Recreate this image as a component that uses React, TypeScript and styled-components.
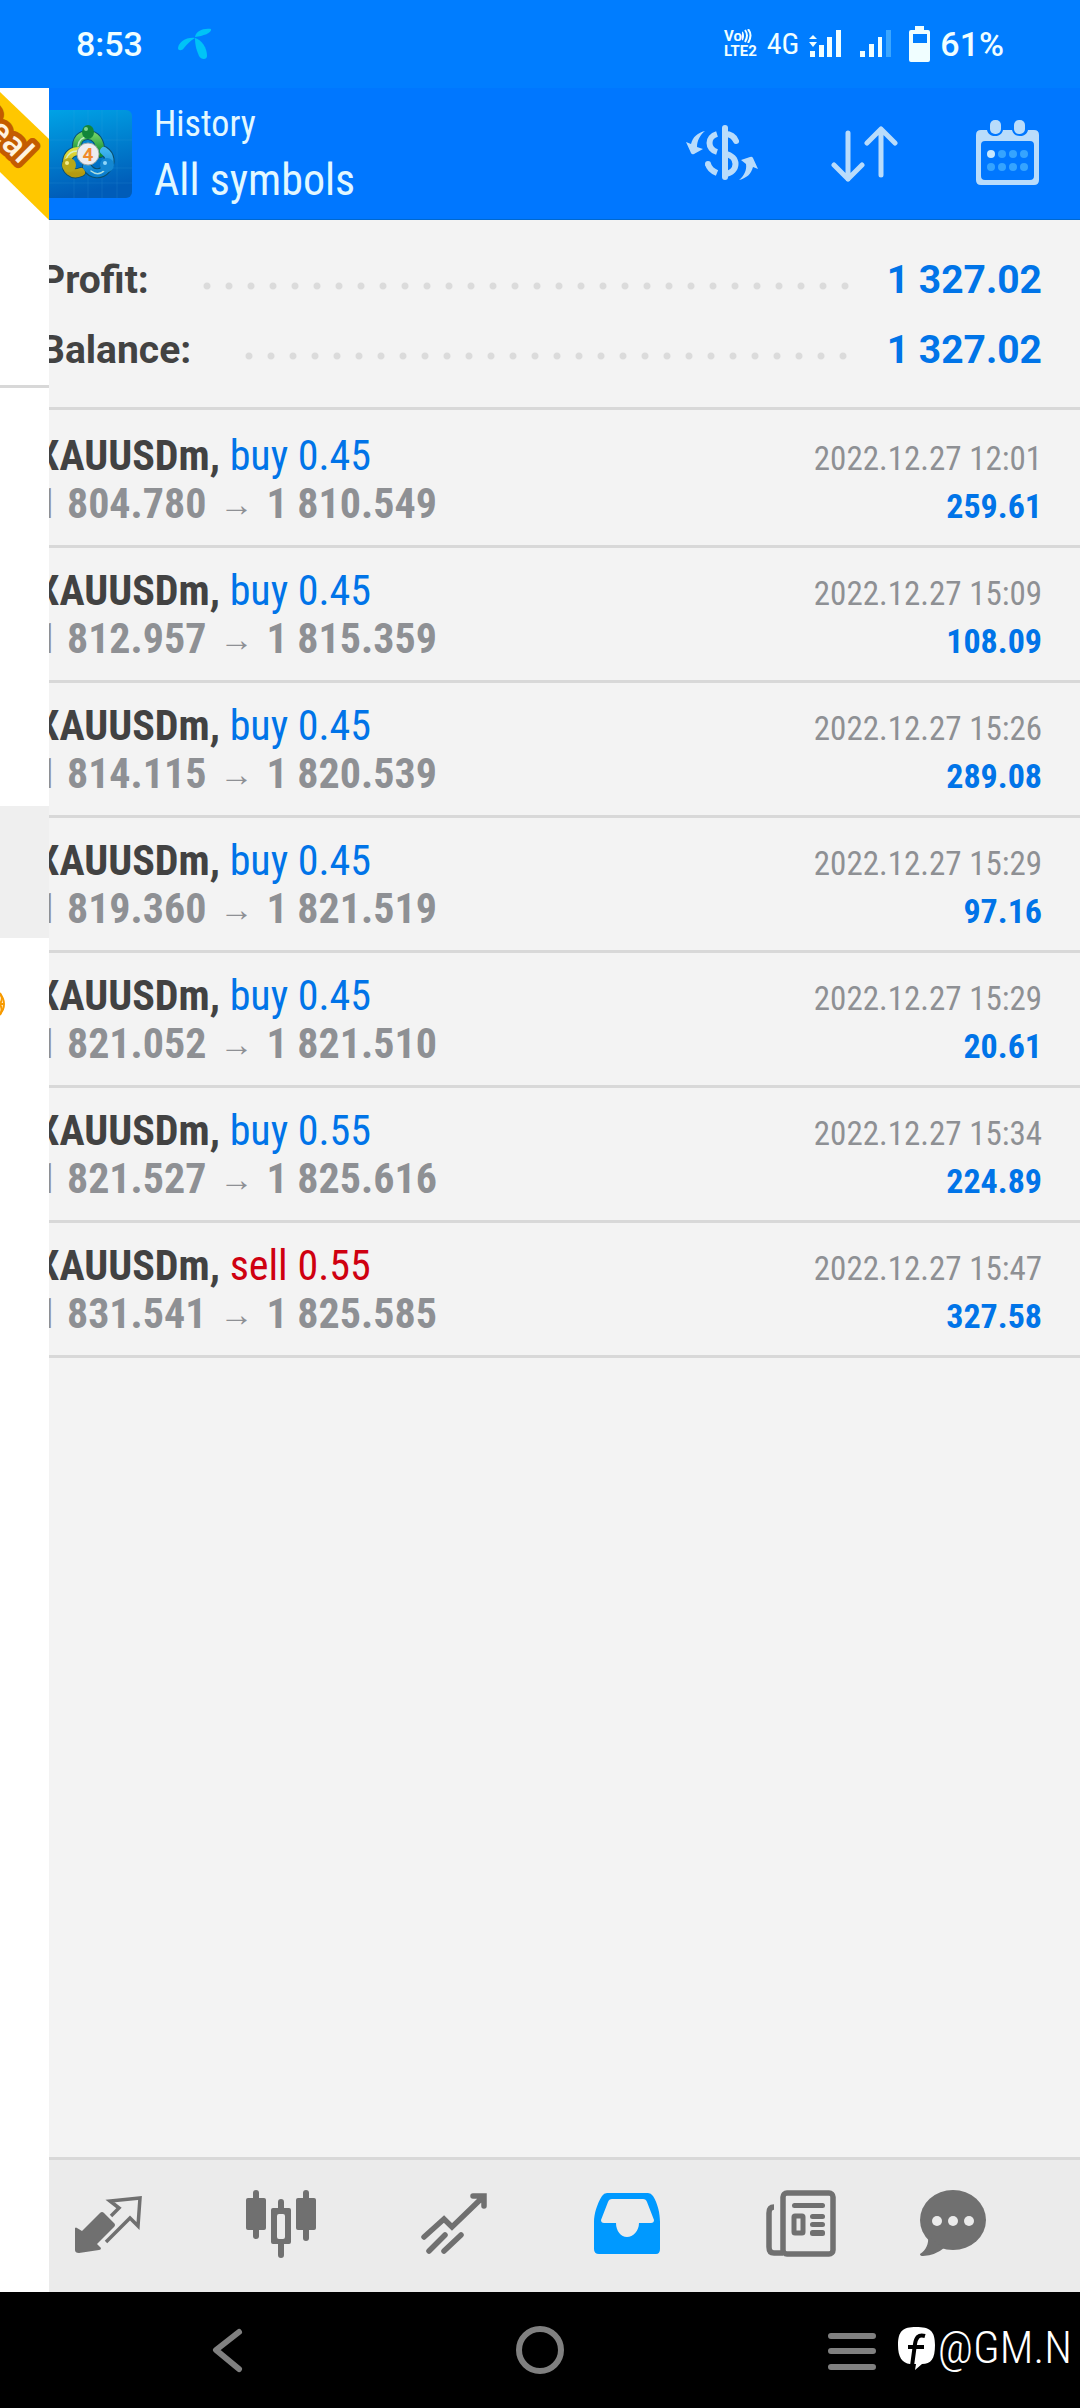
import React from "react";
import styled, { createGlobalStyle } from "styled-components";

const CONDENSED = `"Roboto Condensed", Roboto, sans-serif`;
const REGULAR = `Roboto, sans-serif`;

const GlobalStyle = createGlobalStyle`
  *, *::before, *::after { box-sizing: border-box; }
  body { margin: 0; background: #f3f3f3; font-family: ${REGULAR}; }
  svg { display: block; flex: none; }
  button, a { padding: 0; border: 0; background: none; color: inherit; cursor: pointer; }
`;

const Screen = styled.div`
  display: flex;
  flex-direction: column;
  min-height: 100vh;
  overflow: hidden;
`;

/* ---------- status bar ---------- */

const StatusBar = styled.header`
  display: flex;
  align-items: center;
  justify-content: space-between;
  height: 88px;
  padding: 0 76px;
  background: #007dff;
  color: #f0feff;
`;

const StatusGroup = styled.div<{ $gap: number }>`
  display: flex;
  align-items: center;
  gap: ${(p) => p.$gap}px;
`;

const StatusText = styled.span`
  font: 500 34px/40px ${REGULAR};
`;

const NetworkText = styled.span`
  font: 400 30px/40px ${CONDENSED};
`;

const VoLte = styled.span`
  display: grid;
  font: 700 15px/15px ${REGULAR};
`;

const VoLine = styled.span`
  display: flex;
`;

/* ---------- frame ---------- */

const Body = styled.div`
  display: flex;
  flex: 1;
`;

const Drawer = styled.aside`
  position: relative;
  z-index: 1;
  flex: none;
  width: 49px;
  background: #fff;
`;

const Account = styled.div`
  height: 300px;
  border-bottom: 3px solid #d8d8d8;
`;

const DrawerList = styled.ul`
  margin: 0;
  padding: 22px 0 0;
  list-style: none;
`;

const DrawerItem = styled.li<{ $active?: boolean }>`
  display: flex;
  align-items: center;
  height: 132px;
  background: ${(p) => (p.$active ? "#efefef" : "transparent")};
`;

const Page = styled.div`
  display: flex;
  flex: 1;
  flex-direction: column;
  min-width: 0;
  margin-left: -13px;
  background: #f3f3f3;
`;

/* ---------- app bar ---------- */

const AppBar = styled.div`
  display: flex;
  align-items: center;
  height: 132px;
  padding: 0 32px 0 8px;
  border-bottom: 1px solid #0068cf;
  background: #0077ff;
`;

const Titles = styled.div`
  flex: 1;
  padding: 4px 0 0 22px;
  color: #e2f8ff;
  font-family: ${CONDENSED};
`;

const Overline = styled.div`
  font-size: 36px;
  line-height: 48px;
`;

const Title = styled.h1`
  margin: 0;
  font-size: 44px;
  font-weight: 400;
  line-height: 64px;
`;

const Actions = styled.div`
  display: flex;
  gap: 73px;
  color: #b9dcfb;
`;

/* ---------- summary ---------- */

const Summary = styled.dl`
  margin: 0 0 3px;
  padding: 25px 38px 22px 4px;
  border-bottom: 3px solid #d8d8d8;
`;

const SummaryRow = styled.div`
  display: flex;
  align-items: center;
  font: 700 39px/70px ${REGULAR};
`;

const SummaryLabel = styled.dt`
  color: #424242;
`;

const Leader = styled.span`
  flex: 1;
  height: 8px;
  margin: 12px 32px 0 47px;
  background: radial-gradient(circle, #dbdbdb 3px, transparent 4px) 0 0 / 22px 8px repeat-x;
`;

const SummaryValue = styled.dd`
  margin: 0;
  color: #0074e8;
`;

/* ---------- trades ---------- */

const Trades = styled.ul`
  flex: 1;
  margin: 0;
  padding: 0;
  list-style: none;
`;

const Trade = styled.li`
  padding: 19px 38px 17px 0;
  border-bottom: 3px solid #d8d8d8;
  font-family: ${CONDENSED};
`;

const TradeLine = styled.div`
  display: flex;
  align-items: baseline;
  justify-content: space-between;
  height: 48px;
  line-height: 48px;
`;

const Deal = styled.span`
  color: #424242;
  font-size: 42px;
`;

const Side = styled.span<{ $side: "buy" | "sell" }>`
  color: ${(p) => (p.$side === "buy" ? "#0074e8" : "#cf0010")};
`;

const Prices = styled.span`
  display: flex;
  color: #8e9094;
  font-size: 42px;
  font-weight: 700;
`;

const Arrow = styled.span`
  margin: 0 13px;
  font-family: "Liberation Sans", sans-serif;
  font-size: 34px;
`;

const Time = styled.time`
  color: #8e9094;
  font-size: 33px;
`;

const Result = styled.span`
  color: #0074e8;
  font-size: 34px;
  font-weight: 700;
`;

/* ---------- bottom bars ---------- */

const Tabs = styled.nav`
  display: grid;
  grid-template-columns: repeat(4, 173fr) 153fr 162fr;
  height: 135px;
  padding: 30px 0 0 37px;
  border-top: 3px solid #d8d8d8;
  background: #ebebeb;
`;

const Tab = styled.button<{ $active?: boolean }>`
  justify-self: start;
  width: 72px;
  height: 72px;
  color: ${(p) => (p.$active ? "#0099ff" : "#707070")};
`;

const SystemNav = styled.nav`
  position: relative;
  display: grid;
  grid-template-columns: repeat(3, 1fr);
  align-items: center;
  justify-items: center;
  height: 116px;
  padding: 0 72px;
  background: #000;
  color: #808080;
`;

const Handle = styled.a`
  position: absolute;
  right: 8px;
  top: 28px;
  display: flex;
  align-items: center;
  gap: 2px;
  color: #fff;
  font: 300 45px/56px ${CONDENSED};
  text-decoration: none;
`;

/* ---------- icons ---------- */

const CarrierIcon = () => (
  <svg width="34" height="32" viewBox="0 0 34 32" fill="#00c3f7">
    <path d="M17 9C18 3 25 0 33 1c1 4-8 7-16 8Z" />
    <path d="M17 10C8 9 1 14 0 20c0 3 4 3 6 0 3-4 6-7 11-10Z" />
    <path d="M17 10c7 2 12 10 12 18 0 4-6 4-8 0-2-5-4-10-4-18Z" />
  </svg>
);

const Waves = () => (
  <svg width="10" height="14" viewBox="0 0 10 14" fill="none" stroke="currentColor" strokeWidth="2">
    <path d="M0 3q2 4 0 8M3 1q4 5 0 12M6 0q5 6 0 14" />
  </svg>
);

const SignalActive = () => (
  <svg width="33" height="28" viewBox="0 0 33 28" fill="currentColor">
    <path d="M1 21h5v6H1zM10 15h5v12h-5zM18 7h5v20h-5zM27 0h5v27h-5zM0 9l4-4 4 4zM0 12h8l-4 5z" />
  </svg>
);

const SignalWeak = () => (
  <svg width="31" height="28" viewBox="0 0 31 28" fill="currentColor">
    <path d="M0 21h5v6H0zM9 14h5v13H9zM18 7h4v20h-4z" />
    <path d="M26 0h5v27h-5z" fill="#3ba6ff" />
  </svg>
);

const Battery = () => (
  <svg width="21" height="36" viewBox="0 0 21 36" fill="currentColor" fillRule="evenodd">
    <path d="M6 0h9v4h4q2 0 2 2v28q0 2-2 2H2q-2 0-2-2V6q0-2 2-2h4ZM4 8v9h14V8Z" />
  </svg>
);

const AppLogo = () => (
  <svg width="88" height="88" viewBox="0 0 88 88">
    <defs>
      <linearGradient id="tile" x1="0" y1="0" x2="0.2" y2="1">
        <stop offset="0" stopColor="#00a3e6" />
        <stop offset="1" stopColor="#005cb8" />
      </linearGradient>
      <linearGradient id="green" x1="0" y1="0" x2="0" y2="1">
        <stop offset="0" stopColor="#6ccf62" />
        <stop offset="1" stopColor="#0f8c35" />
      </linearGradient>
      <linearGradient id="yellow" x1="0" y1="0" x2="0" y2="1">
        <stop offset="0" stopColor="#e2dc3c" />
        <stop offset="1" stopColor="#b39a10" />
      </linearGradient>
      <linearGradient id="blue" x1="0" y1="0" x2="0" y2="1">
        <stop offset="0" stopColor="#3fb4ee" />
        <stop offset="1" stopColor="#0a7fd0" />
      </linearGradient>
    </defs>
    <rect width="88" height="88" rx="6" fill="url(#tile)" />
    <path d="M30 0v88M44 0v88M58 0v88M73 0v88M0 30h88M0 58h88M0 73h88" stroke="#48b6ee" strokeOpacity="0.15" />
    <g fill="none" strokeLinecap="round">
      <g strokeWidth="10" stroke="#0b4f6c">
        <path d="M33 40C32 29 37 25 44 25s13 6 12 18" />
        <path d="M37 62C28 66 21 60 23 51c1-7 6-10 12-10" />
        <path d="M43 57c5 8 14 8 19 2 6-6 4-14-2-18" />
      </g>
      <path d="M33 40C32 29 37 25 44 25s13 6 12 18" stroke="url(#green)" strokeWidth="8" />
      <path d="M37 62C28 66 21 60 23 51c1-7 6-10 12-10" stroke="url(#yellow)" strokeWidth="8" />
      <path d="M43 57c5 8 14 8 19 2 6-6 4-14-2-18" stroke="url(#blue)" strokeWidth="8" />
      <path d="M34 36c1-7 5-9 10-9M22 49c2-5 6-8 11-8M47 61c5 4 10 3 14-1" stroke="#d8f5e0" strokeOpacity="0.8" strokeWidth="1.5" />
    </g>
    <ellipse cx="44" cy="22" rx="6" ry="7" fill="#12853a" />
    <circle cx="25" cy="55" r="7" fill="#b8a818" />
    <circle cx="63" cy="55" r="7" fill="#1487d2" />
    <circle cx="42" cy="19" r="2" fill="#7fd38d" />
    <circle cx="23" cy="53" r="2" fill="#f4ec8a" />
    <circle cx="61" cy="53" r="2" fill="#8fd6fa" />
    <circle cx="44" cy="44" r="11" fill="#ececf0" stroke="#9aa7a8" strokeWidth="1" />
    <text x="44" y="51" textAnchor="middle" fontFamily="Roboto, sans-serif" fontSize="19" fontWeight="700" fill="#f08a2c">
      4
    </text>
  </svg>
);

const SwapIcon = () => (
  <svg width="72" height="72" viewBox="0 -7 72 72" fill="none" stroke="currentColor" strokeWidth="6">
    <path d="M39 3V52" strokeLinecap="round" />
    <path d="M39 9C45 9 48 11 50 16" strokeLinecap="round" />
    <path d="M39 29C53 31 53 47 39 49" />
    <path d="M31 9C21 12 21 24 31 27" />
    <path d="M22 39C23 43 26 46 31 48" />
    <circle cx="22" cy="39" r="3" fill="currentColor" stroke="none" />
    <path
      d="M19 6C11 8 7 12 5 19L0 17L5 28Q6 30 8 29L17 24L11 22C11 16 14 10 19 6ZM53 55C61 53 65 49 67 42L72 44L67 33Q66 31 64 32L55 35L60 39C61 45 58 51 53 55Z"
      fill="currentColor"
      stroke="none"
    />
  </svg>
);

const SortIcon = () => (
  <svg width="72" height="72" viewBox="0 -7 72 72" fill="none" stroke="currentColor" strokeWidth="5" strokeLinecap="round" strokeLinejoin="round">
    <path d="M17 8V54M3 40L17 54L31 40M50 50V4M36 18L50 4L64 18" />
  </svg>
);

const CalendarIcon = () => (
  <svg width="72" height="72" viewBox="0 -2 72 72">
    <path
      fillRule="evenodd"
      fill="currentColor"
      d="M5 10H11C12 14 15 16 19 16S26 14 27 10H36C37 14 40 16 44 16S51 14 52 10H58Q63 10 63 15V60Q63 65 58 65H5Q0 65 0 60V15Q0 10 5 10ZM9 21Q5 21 5 25V56Q5 60 9 60H54Q58 60 58 56V25Q58 21 54 21Z"
    />
    <rect x="14" y="0" width="11" height="14" rx="5" fill="currentColor" />
    <rect x="38" y="0" width="11" height="14" rx="5" fill="currentColor" />
    {[34, 47].map((y) => [15, 26, 37, 48].map((x) => <circle key={`${x}-${y}`} cx={x} cy={y} r="4" fill={x === 15 && y === 34 ? "#c6e8ff" : "#35a4ff"} />))}
  </svg>
);

const QuotesIcon = () => (
  <svg width="72" height="72" viewBox="0 0 72 72">
    <path fill="currentColor" d="M2 38Q3 37 4 38L9 41L27 23Q29 21 31 23L41 33Q43 35 41 37L24 54L28 58Q28 60 26 60L6 63Q2 63 2 60Z" />
    <path d="M38 26L46 18L37 11L67 8L65 36L57 28L33 52" fill="none" stroke="currentColor" strokeWidth="3.5" />
  </svg>
);

const CandlesIcon = () => (
  <svg width="72" height="72" viewBox="0 0 72 72" fill="currentColor">
    <rect x="0" y="8" width="20" height="32" rx="2" />
    <rect x="7" y="0" width="6" height="49" rx="3" />
    <path fillRule="evenodd" d="M27 18H43Q45 18 45 20V52Q45 54 43 54H27Q25 54 25 52V20Q25 18 27 18ZM33 24Q31 24 31 26V47Q31 49 33 49H37Q39 49 39 47V26Q39 24 37 24Z" />
    <path d="M32 19V12Q32 9 35 9T38 12V19ZM32 53V65Q32 68 35 68T38 65V53Z" />
    <rect x="50" y="8" width="20" height="32" rx="2" />
    <rect x="57" y="0" width="6" height="51" rx="3" />
  </svg>
);

const TradeIcon = () => (
  <svg width="72" height="72" viewBox="0 0 72 72" fill="none" stroke="currentColor" strokeWidth="5.5" strokeLinecap="round">
    <path d="M5 47L25 29L33 37L64 7M54 6H65V16" />
    <path d="M10 61L26 45M25 61L42 45" />
  </svg>
);

const HistoryIcon = () => (
  <svg width="72" height="72" viewBox="0 0 72 72">
    <path
      fill="currentColor"
      fillRule="evenodd"
      d="M15 3H56Q59 3 61 6C66 14 68 24 68 32V59Q68 64 64 64H7Q2 64 2 59V32C2 24 5 14 10 6Q12 3 15 3ZM20 9Q17 9 16 12L9 30Q9 33 12 33H24C24 41 29 47 35 47S47 41 47 33H59Q62 33 62 30L55 12Q54 9 51 9Z"
    />
  </svg>
);

const NewsIcon = () => (
  <svg width="72" height="72" viewBox="0 0 72 72" fill="currentColor">
    <rect x="18" y="3" width="50" height="61" rx="4" fill="none" stroke="currentColor" strokeWidth="5.5" />
    <path d="M9 17Q4 17 4 23V57Q4 63 9 63H18" fill="none" stroke="currentColor" strokeWidth="5.5" />
    <rect x="27" y="13" width="33" height="5" rx="2.5" />
    <rect x="29" y="26" width="9" height="17" rx="1" fill="none" stroke="currentColor" strokeWidth="5" />
    <rect x="45" y="24" width="15" height="5" rx="2.5" />
    <rect x="45" y="32" width="15" height="5" rx="2.5" />
    <rect x="45" y="40" width="15" height="6" rx="2.5" />
  </svg>
);

const ChatIcon = () => (
  <svg width="72" height="72" viewBox="0 0 72 72">
    <ellipse cx="35" cy="30" rx="33" ry="30" fill="currentColor" />
    <path d="M10 46C11 54 8 60 2 64Q2 66 5 66Q18 65 26 58Z" fill="currentColor" />
    {[19, 35, 51].map((x) => (
      <circle key={x} cx={x} cy="31" r="5" fill="#ebebeb" />
    ))}
  </svg>
);

const Ribbon = () => (
  <svg width="49" height="132" viewBox="0 0 49 132">
    <path d="M0 4L49 51V132L0 84Z" fill="#ffc700" />
    <text
      transform="translate(20 77) rotate(45)"
      textAnchor="end"
      fontFamily="Noto Sans, sans-serif"
      fontSize="32"
      fontWeight="600"
      fill="#fff3e0"
      stroke="#c45c00"
      strokeWidth="10"
      strokeLinejoin="round"
      paintOrder="stroke"
    >
      Real
    </text>
  </svg>
);

const CoinIcon = () => (
  <svg width="6" height="32" viewBox="0 0 6 32" fill="none" stroke="#f79a00" strokeWidth="2">
    <circle cx="-10" cy="16" r="14" />
    <path d="M0 5q3 4 1 9q-1 2-1 2q4 0 4 0M0 16q3 6 0 11" />
  </svg>
);

const HandleLogo = () => (
  <svg width="38" height="44" viewBox="0 0 38 44">
    <path d="M18 1C32 1 37 5 37 19C37 33 33 38 24 38L17 44L18 38H12C4 37 0 31 0 19C0 5 5 1 18 1Z" fill="#fff" />
    <path d="M27 10C20 8 18 12 17 18L14 40M10 21H26" fill="none" stroke="#000" strokeWidth="4" />
  </svg>
);

/* ---------- data ---------- */

type TradeData = { side: "buy" | "sell"; volume: string; open: string; close: string; time: string; result: string };

const trades: TradeData[] = [
  { side: "buy", volume: "0.45", open: "1 804.780", close: "1 810.549", time: "2022.12.27 12:01", result: "259.61" },
  { side: "buy", volume: "0.45", open: "1 812.957", close: "1 815.359", time: "2022.12.27 15:09", result: "108.09" },
  { side: "buy", volume: "0.45", open: "1 814.115", close: "1 820.539", time: "2022.12.27 15:26", result: "289.08" },
  { side: "buy", volume: "0.45", open: "1 819.360", close: "1 821.519", time: "2022.12.27 15:29", result: "97.16" },
  { side: "buy", volume: "0.45", open: "1 821.052", close: "1 821.510", time: "2022.12.27 15:29", result: "20.61" },
  { side: "buy", volume: "0.55", open: "1 821.527", close: "1 825.616", time: "2022.12.27 15:34", result: "224.89" },
  { side: "sell", volume: "0.55", open: "1 831.541", close: "1 825.585", time: "2022.12.27 15:47", result: "327.58" },
];

const totals = [
  { label: "Profit:", value: "1 327.02" },
  { label: "Balance:", value: "1 327.02" },
];

const tabs = [
  { name: "Quotes", Icon: QuotesIcon },
  { name: "Charts", Icon: CandlesIcon },
  { name: "Trade", Icon: TradeIcon },
  { name: "History", Icon: HistoryIcon },
  { name: "News", Icon: NewsIcon },
  { name: "Messages", Icon: ChatIcon },
];

export default function App() {
  return (
    <Screen>
      <GlobalStyle />
      <StatusBar>
        <StatusGroup $gap={35}>
          <StatusText>8:53</StatusText>
          <CarrierIcon />
        </StatusGroup>
        <StatusGroup $gap={18}>
          <StatusGroup $gap={10}>
            <VoLte>
              <VoLine>
                Vo
                <Waves />
              </VoLine>
              <span>LTE2</span>
            </VoLte>
            <NetworkText>4G</NetworkText>
            <SignalActive />
          </StatusGroup>
          <SignalWeak />
          <StatusGroup $gap={10}>
            <Battery />
            <StatusText>61%</StatusText>
          </StatusGroup>
        </StatusGroup>
      </StatusBar>

      <Body>
        <Drawer>
          <Account>
            <Ribbon />
          </Account>
          <DrawerList>
            <DrawerItem />
            <DrawerItem />
            <DrawerItem />
            <DrawerItem $active />
            <DrawerItem>
              <CoinIcon />
            </DrawerItem>
          </DrawerList>
        </Drawer>

        <Page>
          <AppBar>
            <AppLogo />
            <Titles>
              <Overline>History</Overline>
              <Title>All symbols</Title>
            </Titles>
            <Actions>
              <button type="button" aria-label="Symbols">
                <SwapIcon />
              </button>
              <button type="button" aria-label="Sort">
                <SortIcon />
              </button>
              <button type="button" aria-label="Period">
                <CalendarIcon />
              </button>
            </Actions>
          </AppBar>

          <Summary>
            {totals.map((t) => (
              <SummaryRow key={t.label}>
                <SummaryLabel>{t.label}</SummaryLabel>
                <Leader />
                <SummaryValue>{t.value}</SummaryValue>
              </SummaryRow>
            ))}
          </Summary>

          <Trades>
            {trades.map((t) => (
              <Trade key={t.open}>
                <TradeLine>
                  <Deal>
                    <b>XAUUSDm,</b>{" "}
                    <Side $side={t.side}>
                      {t.side} {t.volume}
                    </Side>
                  </Deal>
                  <Time>{t.time}</Time>
                </TradeLine>
                <TradeLine>
                  <Prices>
                    {t.open}
                    <Arrow>→</Arrow>
                    {t.close}
                  </Prices>
                  <Result>{t.result}</Result>
                </TradeLine>
              </Trade>
            ))}
          </Trades>

          <Tabs aria-label="Sections">
            {tabs.map(({ name, Icon }) => (
              <Tab key={name} type="button" aria-label={name} $active={name === "History"}>
                <Icon />
              </Tab>
            ))}
          </Tabs>
        </Page>
      </Body>

      <SystemNav aria-label="System">
        <button type="button" aria-label="Back">
          <svg width="48" height="48" viewBox="0 0 48 48" fill="none" stroke="currentColor" strokeWidth="6" strokeLinecap="round" strokeLinejoin="round">
            <path d="M35 6L12 24L35 43" />
          </svg>
        </button>
        <button type="button" aria-label="Home">
          <svg width="48" height="48" viewBox="0 0 48 48" fill="none" stroke="currentColor" strokeWidth="6">
            <circle cx="24" cy="24" r="21" />
          </svg>
        </button>
        <button type="button" aria-label="Recents">
          <svg width="50" height="48" viewBox="0 0 50 48" fill="none" stroke="currentColor" strokeWidth="6" strokeLinecap="round">
            <path d="M4 10H46M4 25H46M4 41H46" />
          </svg>
        </button>
        <Handle href="#gmn">
          <HandleLogo />
          @GM.N
        </Handle>
      </SystemNav>
    </Screen>
  );
}
